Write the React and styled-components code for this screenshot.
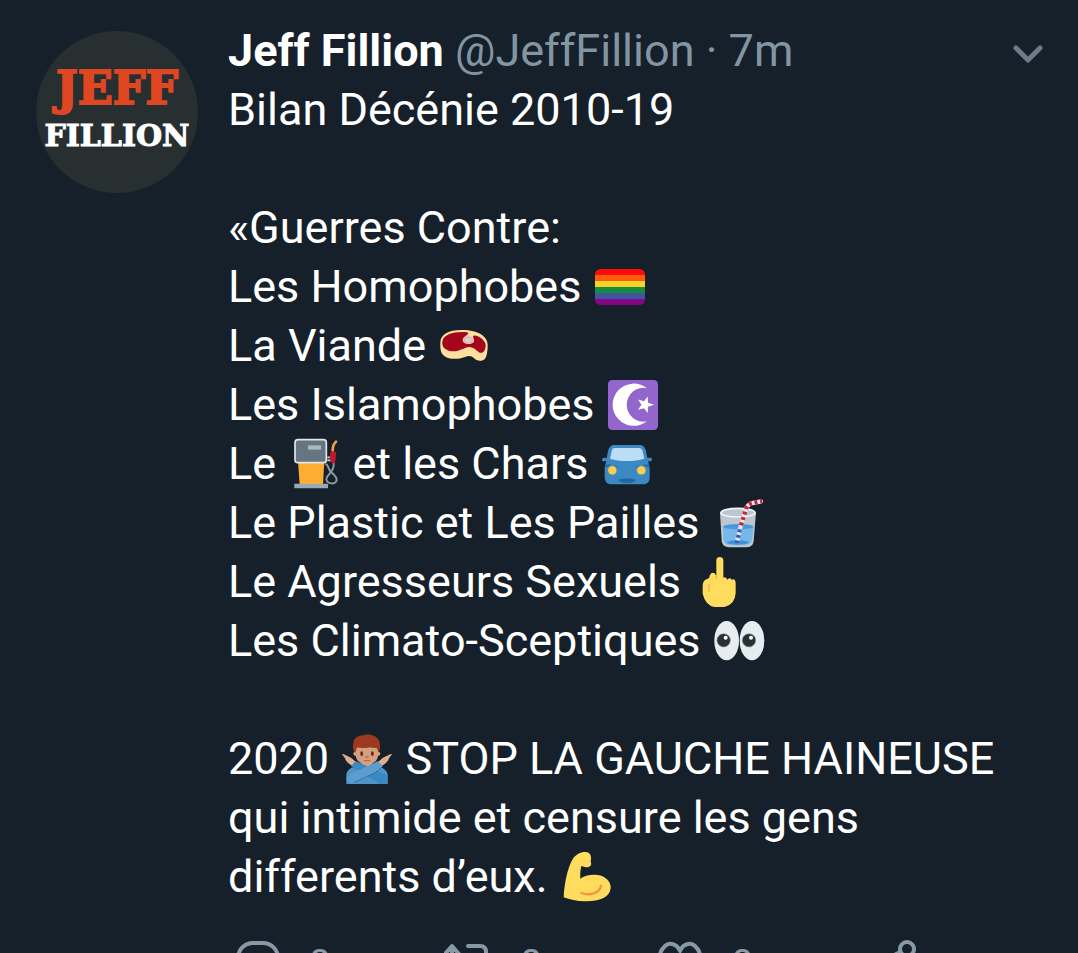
import React from "react";
import styled, { createGlobalStyle } from "styled-components";

const GlobalStyle = createGlobalStyle`
  *, *::before, *::after { box-sizing: border-box; }
  body {
    margin: 0;
    background: #16202a;
    color: #ffffff;
    font-family: Roboto, "Noto Sans", sans-serif;
  }
`;

const Tweet = styled.article`
  display: flex;
  gap: 30px;
  height: 100vh;
  overflow: hidden;
  padding: 21px 30px 0 36px;
`;

const Avatar = styled.a`
  flex: none;
  display: flex;
  flex-direction: column;
  align-items: center;
  width: 162px;
  height: 162px;
  margin-top: 10px;
  padding-top: 33px;
  border-radius: 50%;
  background: #272f31;
  font-family: "DejaVu Serif", serif;
  font-weight: 700;
  text-decoration: none;
`;

const AvatarWord = styled.span`
  font-size: ${(p) => p.$size}px;
  line-height: 48px;
  color: ${(p) => p.$color};
  -webkit-text-stroke: ${(p) => p.$stroke}px ${(p) => p.$color};
`;

const Main = styled.div`
  flex: 1;
  min-width: 0;
`;

const Header = styled.header`
  display: flex;
  align-items: center;
  justify-content: space-between;
  height: 59px;
  font-size: 45px;
  line-height: 59px;
  white-space: nowrap;
`;

const Byline = styled.div`
  color: #8295a3;
`;

const Name = styled.a`
  color: #ffffff;
  font-weight: 700;
  text-decoration: none;
`;

const Handle = styled.a`
  color: inherit;
  text-decoration: none;
`;

const MenuButton = styled.button`
  display: flex;
  padding: 10px 4px 4px;
  border: 0;
  background: none;
  color: #6c7b89;
`;

const Body = styled.p`
  margin: 0;
  font-size: 45px;
  line-height: 59px;
  white-space: pre-line;
`;

const EmojiSvg = styled.svg`
  width: 50px;
  height: 50px;
  margin: 0 2px;
  vertical-align: -10px;
  overflow: visible;
`;

const Actions = styled.footer`
  display: grid;
  grid-template-columns: 211fr 211fr 211fr 186fr;
  margin-top: 31px;
`;

const ActionButton = styled.button`
  display: flex;
  align-items: center;
  gap: 25px;
  padding: 0 0 0 5px;
  border: 0;
  background: none;
  color: #8899a6;
  font-family: inherit;
  font-size: 36px;
  line-height: 50px;
`;

const ActionIcon = styled.svg`
  width: 52px;
  height: 52px;
  fill: none;
  stroke: currentColor;
  stroke-width: 4;
  stroke-linecap: round;
  stroke-linejoin: round;
`;

const Emoji = ({ label, box, children }) => (
  <EmojiSvg role="img" aria-label={label} viewBox={box}>
    {children}
  </EmojiSvg>
);

const Rainbow = () => (
  <Emoji label="Arc-en-ciel" box="0 0 36 36">
    <path fill="#fd0b0b" d="M4 5h28a4 4 0 0 1 4 4v1H0V9a4 4 0 0 1 4-4z" />
    <path fill="#fe5b0a" d="M0 9.3h36v4.4H0z" />
    <path fill="#f6d32b" d="M0 13.7h36V18H0z" />
    <path fill="#168b3c" d="M0 18h36v4.4H0z" />
    <path fill="#3f57a0" d="M0 22.3h36v4.4H0z" />
    <path fill="#870683" d="M0 26.6h36v.4a4 4 0 0 1-4 4H4a4 4 0 0 1-4-4z" />
  </Emoji>
);

const Meat = () => (
  <Emoji label="Viande" box="27 3 150 150">
    <path
      fill="#ffe0a0"
      d="M31 68C31 42 58 29 98 30C143 31 174 48 173 76C173 91 171 109 165 116C158 124 143 124 135 117C126 108 118 106 105 111C83 119 57 119 42 107C30 98 31 82 31 68Z"
    />
    <path
      fill="#a4061c"
      d="M37 65C40 44 68 35 103 36C112 36 117 38 113 43C108 49 98 51 98 61C99 73 122 76 131 66C136 58 125 51 131 47C143 44 160 57 166 70C169 83 164 96 156 98C145 101 140 87 127 83C112 77 103 88 84 92C58 98 34 87 37 65Z"
    />
    <ellipse cx="115" cy="60" rx="15" ry="11" fill="#f4abba" />
    <ellipse cx="115" cy="60" rx="9" ry="6" fill="#ccd6dd" />
  </Emoji>
);

const Crescent = () => (
  <Emoji label="Étoile et croissant" box="0 0 36 36">
    <rect width="36" height="36" rx="3" fill="#9266cc" />
    <path fill="#fff" d="M28 5.9A15.2 15.2 0 1 0 28 29.7A11.9 12.2 0 1 1 28 5.9Z" />
    <path
      fill="#fff"
      d="M33.2 17.8L28.8 19.3L28.6 23.8L25.9 20.3L21.6 21.5L24.1 17.8L21.6 14.1L25.9 15.3L28.6 11.8L28.8 16.3Z"
    />
  </Emoji>
);

const Pump = () => (
  <Emoji label="Essence" box="27 27 150 150">
    <path fill="#ffac33" d="M54 94H133L129 163H59Z" />
    <rect x="43" y="161" width="101" height="14" rx="2" fill="#9aaab4" />
    <rect x="45" y="29" width="94" height="69" rx="9" fill="#66757f" stroke="#e1e8ed" strokeWidth="5" />
    <rect x="84" y="46" width="39" height="13" fill="#aab8c2" />
    <path
      fill="none"
      stroke="#8899a6"
      strokeWidth="6"
      d="M136 101C145 103 143 113 151 124C159 132 171 141 170 150C169 165 140 163 139 147C139 132 164 130 161 98"
    />
    <path fill="none" stroke="#ccd6dd" strokeWidth="5" d="M142 82H153M142 91H153" />
    <path fill="none" stroke="#f4a238" strokeWidth="8" strokeLinecap="round" d="M158 62L159 51Q161 42 168 35" />
    <path fill="#be1931" d="M154 64H164Q169 66 168 76L166 94Q165 101 158 100L152 96L149 81Q151 75 151 67Z" />
  </Emoji>
);

const Car = () => (
  <Emoji label="Voiture" box="24 27 150 150">
    <path
      fill="#3b88c3"
      d="M57 45H141Q152 48 156 63L160 83H171Q176 84 173 92Q171 95 162 94L167 111V145Q165 161 152 163H47Q35 161 32 145V111L37 94H28Q22 93 24 87Q27 82 38 84L42 63Q46 48 57 45Z"
    />
    <path fill="#bbddf5" d="M62 54H135Q143 54 146 64L151 86Q129 93 99 93Q69 93 48 86L53 64Q55 54 62 54Z" />
    <path fill="#226699" d="M34 104Q59 101 74 113Q68 111 64 110Q46 101 34 114ZM164 104Q139 101 124 113Q130 111 134 110Q152 101 165 114Z" />
    <circle cx="55" cy="121" r="14" fill="#ffcc4d" stroke="#5196b0" strokeWidth="3" />
    <circle cx="142" cy="121" r="14" fill="#ffcc4d" stroke="#5196b0" strokeWidth="3" />
    <path fill="#226699" d="M72 149Q99 142 126 149Q121 158 99 159Q77 158 72 149Z" />
  </Emoji>
);

const Straw = () => (
  <Emoji label="Gobelet avec paille" box="36 24 150 150">
    <path fill="#bdc7cf" d="M57 67L62 153Q63 169 82 172H138Q156 170 158 153L165 67Z" />
    <path fill="#75b9ea" d="M65 108H158L153 151Q151 162 136 164H84Q69 162 68 149Z" />
    <ellipse cx="112" cy="110" rx="45" ry="8" fill="#4a98d9" />
    <ellipse cx="111" cy="68" rx="51" ry="13" fill="#bcc6ce" stroke="#f1f5f8" strokeWidth="5" />
    <path fill="#3d91d6" d="M76 156Q109 144 145 156Q137 164 110 164Q83 164 76 156Z" />
    <path fill="none" stroke="#dfe3ef" strokeWidth="13" d="M107 160L119 108" />
    <path fill="none" stroke="#3659be" strokeWidth="13" strokeDasharray="9 8" d="M107 160L119 108" />
    <path fill="none" stroke="#f7e8ec" strokeWidth="13" strokeLinecap="round" d="M120 106L135 57Q139 43 154 39L180 34" />
    <path fill="none" stroke="#bf2945" strokeWidth="13" strokeDasharray="9 8" d="M120 106L135 57Q139 43 154 39L184 33" />
  </Emoji>
);

const Finger = () => (
  <Emoji label="Doigt d'honneur" box="-18 201 150 150">
    <path
      fill="#ffdc5d"
      d="M49 211Q50 201 59 201Q69 201 70 211V263Q77 259 82 269Q90 261 95 269Q106 263 107 280V309Q105 344 73 351H43Q16 345 8 311V288Q8 273 19 268Q29 265 29 257Q33 245 44 250L49 257Z"
    />
    <path fill="none" stroke="#e9a83e" strokeWidth="3" strokeLinecap="round" d="M27 304V283M49 265V257" />
  </Emoji>
);

const Eyes = () => (
  <Emoji label="Yeux" box="44 378 150 150">
    <ellipse cx="82" cy="452" rx="37" ry="59" fill="#e6edf1" />
    <ellipse cx="158" cy="452" rx="37" ry="59" fill="#e6edf1" />
    <circle cx="73" cy="451" r="20" fill="#292f33" stroke="#8899a6" strokeWidth="2" />
    <circle cx="149" cy="451" r="20" fill="#292f33" stroke="#8899a6" strokeWidth="2" />
    <circle cx="79" cy="443" r="6" fill="#fff" />
    <circle cx="155" cy="443" r="6" fill="#fff" />
  </Emoji>
);

const CrossedArms = () => (
  <Emoji label="Homme faisant un geste d'interdiction" box="36 27 150 150">
    <path fill="#4f94ca" d="M49 177V148Q51 132 73 125H147Q170 132 173 148V177Z" />
    <path fill="#d4a07e" d="M94 108H127V126Q111 139 94 126Z" />
    <path fill="#d4a07e" d="M75 67H145V88Q144 116 111 118Q78 116 76 88Z" />
    <circle cx="76" cy="86" r="6" fill="#d4a07e" />
    <circle cx="145" cy="86" r="6" fill="#d4a07e" />
    <path fill="#9d391e" d="M75 83Q66 73 70 54Q73 31 101 31L113 28Q151 32 150 64Q151 74 146 83Q143 77 141 70Q126 68 119 65Q111 72 81 67Q79 77 75 83Z" />
    <ellipse cx="95" cy="86" rx="4" ry="7" fill="#662113" />
    <ellipse cx="127" cy="86" rx="4" ry="7" fill="#662113" />
    <path fill="none" stroke="#c1694f" strokeWidth="4" strokeLinecap="round" d="M107 96H115M103 107H119" />
    <path fill="#dfae91" d="M36 88Q38 85 46 90L57 95Q64 97 72 106L78 111L68 124L55 115Q47 107 44 98Z" />
    <path fill="#dfae91" d="M186 88Q184 85 176 90L165 95Q158 97 150 106L144 111L154 124L167 115Q175 107 178 98Z" />
    <path fill="#3b88c3" d="M77 108L165 148Q174 155 173 165V177H150L63 124Z" />
    <path fill="#5c9dcf" d="M144 108L158 124Q148 137 130 145L72 172Q52 179 49 163Q49 151 66 144L112 124Z" />
    <path fill="none" stroke="#226699" strokeWidth="2" d="M158 124Q148 137 130 146L72 173" />
  </Emoji>
);

const Bicep = () => (
  <Emoji label="Biceps" box="33 36 150 150">
    <path
      fill="#ffdc5d"
      d="M41 172C43 134 51 88 67 59C78 41 98 34 111 37C123 40 125 53 122 65C127 74 120 84 105 81L94 78C91 90 90 103 91 116C103 107 124 102 143 105C166 108 184 125 182 145C179 174 145 185 105 184C80 184 58 178 41 172Z"
    />
    <path fill="none" stroke="#ef9645" strokeWidth="7" strokeLinecap="round" d="M94 159C119 168 148 160 153 138" />
  </Emoji>
);

export default function App() {
  return (
    <>
      <GlobalStyle />
      <Tweet>
        <Avatar href="#profile" aria-label="Jeff Fillion">
          <AvatarWord $size={46} $stroke={2} $color="#df4622">JEFF</AvatarWord>
          <AvatarWord $size={30} $stroke={1} $color="#ffffff">FILLION</AvatarWord>
        </Avatar>
        <Main>
          <Header>
            <Byline>
              <Name href="#profile">Jeff Fillion</Name>{" "}
              <Handle href="#profile">@JeffFillion</Handle> · <time>7m</time>
            </Byline>
            <MenuButton aria-label="Plus">
              <svg width="32" height="22" viewBox="0 0 32 22" fill="none" stroke="currentColor" strokeWidth="5" strokeLinecap="round" strokeLinejoin="round">
                <path d="M4 5L16 17L28 5" />
              </svg>
            </MenuButton>
          </Header>
          <Body>
            Bilan Décénie 2010-19{"\n\n"}
            «Guerres Contre:{"\n"}
            Les Homophobes <Rainbow />{"\n"}
            La Viande <Meat />{"\n"}
            Les Islamophobes <Crescent />{"\n"}
            Le <Pump /> et les Chars <Car />{"\n"}
            Le Plastic et Les Pailles <Straw />{"\n"}
            Le Agresseurs Sexuels <Finger />{"\n"}
            Les Climato-Sceptiques <Eyes />{"\n\n"}
            2020 <CrossedArms /> STOP LA GAUCHE HAINEUSE qui intimide et censure
            les gens differents d’eux. <Bicep />
          </Body>
          <Actions>
            <ActionButton aria-label="Répondre, 2">
              <ActionIcon viewBox="0 0 52 52">
                <path d="M19 6H30A15 15 0 0 1 45 21C45 33 34 37 26 46V37H19A15 15 0 0 1 5 21A15 15 0 0 1 19 6Z" />
              </ActionIcon>
              2
            </ActionButton>
            <ActionButton aria-label="Retweeter, 2">
              <ActionIcon viewBox="0 0 52 52">
                <path d="M1 17L8 9L15 17M8 10V34Q8 40 14 40H26M24 9H36Q42 9 42 15V39M35 32L42 40L49 32" />
              </ActionIcon>
              2
            </ActionButton>
            <ActionButton aria-label="Aimer, 2">
              <ActionIcon viewBox="0 0 52 52">
                <path d="M24 14C20 5 12 6 9 9C-5 22 14 37 24 43C34 37 53 22 39 9C36 6 28 5 24 14Z" />
              </ActionIcon>
              2
            </ActionButton>
            <ActionButton aria-label="Partager">
              <ActionIcon viewBox="0 0 52 52">
                <circle cx="40" cy="12" r="7" />
                <circle cx="12" cy="26" r="7" />
                <circle cx="40" cy="40" r="7" />
                <path d="M18 23L33 15M18 29L33 37" />
              </ActionIcon>
            </ActionButton>
          </Actions>
        </Main>
      </Tweet>
    </>
  );
}
